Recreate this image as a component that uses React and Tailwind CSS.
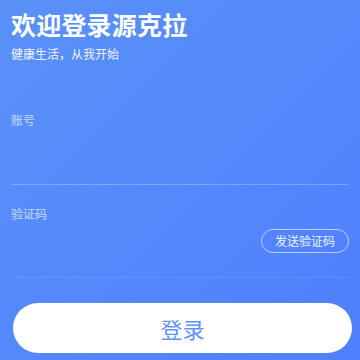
import React, { useState } from 'react';

const font = { fontFamily: '"Noto Sans CJK SC", "Noto Sans", sans-serif' };

export default function App() {
    const [account, setAccount] = useState('');
    const [code, setCode] = useState('');

    return (
        <div className="h-[360px] w-[360px] overflow-hidden bg-gradient-to-br from-[#5a91f7] to-[#4f7ffe] text-white" style={font}>
            <div className="px-[11px] pt-[6px]">
                <h1 className="text-[25px] font-bold leading-[36px] tracking-[0.2px]">欢迎登录源克拉</h1>
                <p className="mt-[4px] text-[12px] leading-[16px] text-white/90">健康生活，从我开始</p>
            </div>

            <div className="mt-[50px] px-[11px]">
                <div className="text-[12px] font-medium leading-[16px] text-white/55">账号</div>
                <input
                    value={account}
                    onChange={e => setAccount(e.target.value)}
                    className="block h-[56px] w-full bg-transparent text-[14px] outline-none"
                />
                <div className="h-px w-full bg-white/25" />
            </div>

            <div className="mt-[21px] px-[11px]">
                <div className="text-[12px] font-medium leading-[16px] text-white/55">验证码</div>
                <div className="flex h-[55px] items-start pt-[7px]">
                    <input
                        value={code}
                        onChange={e => setCode(e.target.value)}
                        className="h-[24px] flex-1 bg-transparent text-[14px] outline-none"
                    />
                    <button className="h-[24px] rounded-full border border-white/60 px-[13px] text-[12px] leading-[22px] text-white/90">
                        发送验证码
                    </button>
                </div>
                <div className="h-px w-full bg-white/10" />
            </div>

            <div className="mt-[25px] pl-[13px] pr-[8px]">
                <button className="flex h-[50px] w-full items-center justify-center rounded-full bg-white text-[22px] text-[#5f93f8]">
                    登录
                </button>
            </div>
        </div>
    );
}
